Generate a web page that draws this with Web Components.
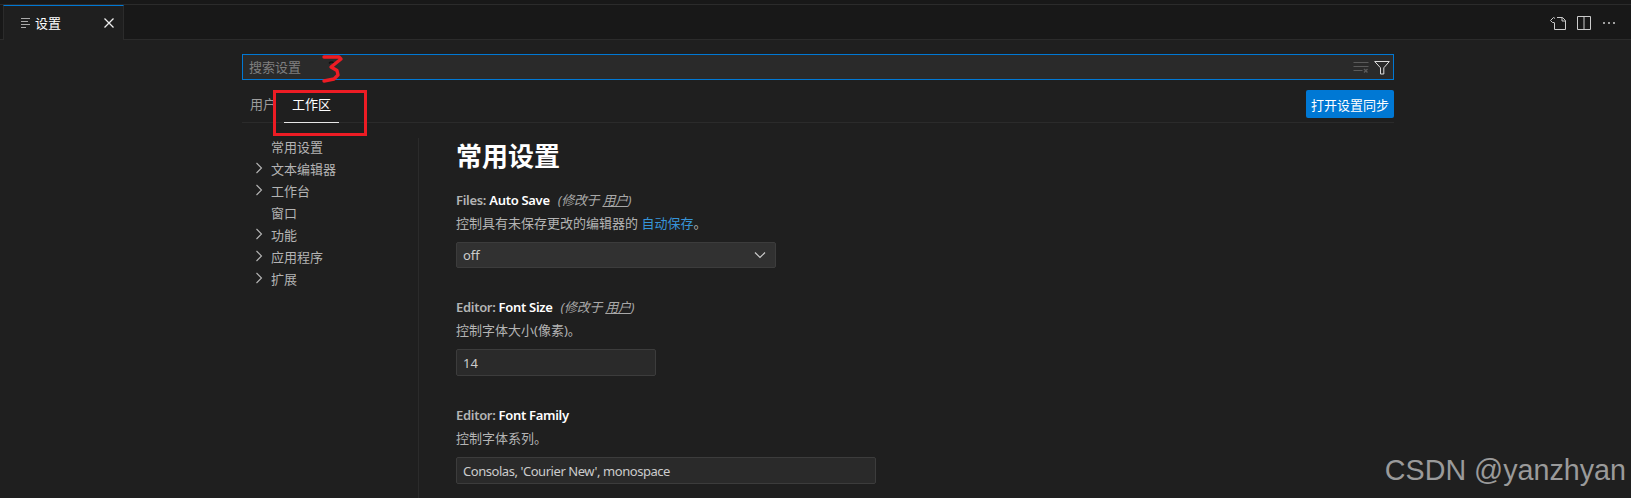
<!DOCTYPE html>
<html>
<head>
<meta charset="utf-8">
<style>
html, body { margin: 0; height: 498px; overflow: hidden; background: #1f1f1f; }
body { font: 13px "Noto Sans", "Noto Sans CJK SC", sans-serif; color: #ccc; position: relative; }
</style>
</head>
<body>
<editor-tabs></editor-tabs>
<settings-page>
  <settings-search></settings-search>
  <settings-targets></settings-targets>
  <div slot="body-nav">
    <nav-row>常用设置</nav-row>
    <nav-row arrow>文本编辑器</nav-row>
    <nav-row arrow>工作台</nav-row>
    <nav-row>窗口</nav-row>
    <nav-row arrow>功能</nav-row>
    <nav-row arrow>应用程序</nav-row>
    <nav-row arrow>扩展</nav-row>
  </div>
  <div slot="body-main">
    <settings-heading>常用设置</settings-heading>
    <setting-item cat="Files: " name="Auto Save" modified gap="29">
      <span slot="desc">控制具有未保存更改的编辑器的 <a style="color:#3794d8">自动保存</a>。</span>
      <setting-select value="off"></setting-select>
    </setting-item>
    <setting-item cat="Editor: " name="Font Size" modified gap="29">
      <span slot="desc">控制字体大小(像素)。</span>
      <setting-input value="14" width="200"></setting-input>
    </setting-item>
    <setting-item cat="Editor: " name="Font Family">
      <span slot="desc">控制字体系列。</span>
      <setting-input value="Consolas, 'Courier New', monospace" width="420" tight></setting-input>
    </setting-item>
  </div>
</settings-page>
<red-marks></red-marks>
<water-mark>CSDN @yanzhyan</water-mark>

<script>
// small helper, each class just dumps its markup in an open shadow root
function shadow(el, html) {
  el.attachShadow({ mode: "open" });
  el.shadowRoot.innerHTML = html;
}

class EditorTabs extends HTMLElement {
  connectedCallback() {
    shadow(this, `
<style>
:host { display: flex; box-sizing: border-box; height: 40px; padding-top: 4px; background: #181818; align-items: stretch; color: #fff; }
.wrap { display: flex; flex: 1; border-top: 1px solid #2b2b2b; border-bottom: 1px solid #2b2b2b; padding-left: 3px; }
.tab { box-sizing: border-box; width: 121px; height: 35px; background: #1f1f1f; border-top: 1px solid #0078d4; border-left: 1px solid #2b2b2b; border-right: 1px solid #2b2b2b; display: flex; align-items: center; padding-left: 17px; gap: 2px; }
.tab svg.x { margin-left: 40px; }
.title { font-size: 13px; color: #fff; padding-bottom: 1px; }
.actions { margin-left: auto; display: flex; gap: 9px; align-items: center; padding: 1px 14px 0 0; color: #ccc; }
svg { display: block; }
</style>
<div class="wrap">
  <div class="tab">
    <svg width="12" height="12" viewBox="0 0 12 12" fill="none" stroke="#aaa" stroke-width="1.2"><path d="M0 1.5h9M0 4.5h7M0 7.5h9M0 10.5h5"/></svg>
    <span class="title">设置</span>
    <svg class="x" width="12" height="12" viewBox="0 0 12 12" fill="none" stroke="#eee" stroke-width="1.3"><path d="M1.5 1.5l9 9M10.5 1.5l-9 9"/></svg>
  </div>
  <div class="actions">
    <svg width="18" height="18" viewBox="0 0 18 18" fill="none" stroke="#ccc" stroke-linejoin="round"><path d="M8 3.5h5.5l3 3v9h-11V9M13 3.5V7h3.5M5.5 8.5H3.5L1.5 6.5l3-3 1.5 1"/></svg>
    <svg width="16" height="16" viewBox="0 0 16 16" fill="none" stroke="#ccc"><path d="M1.5 1.5h13v13h-13zM8 1.5v13"/></svg>
    <svg width="16" height="16" viewBox="0 0 16 16" fill="#ccc"><circle cx="3" cy="8" r="1"/><circle cx="8" cy="8" r="1"/><circle cx="13" cy="8" r="1"/></svg>
  </div>
</div>`);
  }
}

class SettingsPage extends HTMLElement {
  connectedCallback() {
    shadow(this, `
<style>
:host { display: block; box-sizing: border-box; padding: 14px 237px 0 242px; }
.body { display: flex; margin-top: 15px; }
.nav { width: 177px; box-sizing: border-box; height: 361px; border-right: 1px solid #2b2b2b; }
::slotted([slot="body-nav"]) { margin-top: -3px; }
.main { padding-left: 37px; }
</style>
<slot></slot>
<div class="body">
  <div class="nav"><slot name="body-nav"></slot></div>
  <div class="main"><slot name="body-main"></slot></div>
</div>`);
  }
}

class SettingsSearch extends HTMLElement {
  connectedCallback() {
    shadow(this, `
<style>
:host { display: flex; box-sizing: border-box; height: 26px; background: #2a2a2a; border: 1px solid #0078d4; align-items: center; padding: 0 3px 0 5px; }
.ph { color: #7f7f7f; font-size: 13px; flex: 1; padding: 0 0 2px 1px; }
svg { display: block; }
.clear { margin-right: 5px; }
</style>
<span class="ph">搜索设置</span>
<svg class="clear" width="16" height="16" viewBox="0 0 16 16" fill="none" stroke="#5a5a5a"><path d="M0.5 3.5h15M0.5 7.5h15M0.5 11.5h9"/><path d="M11 10l3.5 3.5M14.5 10L11 13.5" stroke-width="1.4"/></svg>
<svg width="16" height="16" viewBox="0 0 16 16" fill="none" stroke="#ddd"><path d="M0.7 2.5h14.6L9.8 8.8V15H6.5V8.8z" stroke-linejoin="round"/></svg>`);
  }
}

class SettingsTargets extends HTMLElement {
  connectedCallback() {
    shadow(this, `
<style>
:host { display: flex; box-sizing: border-box; height: 43px; border-bottom: 1px solid #2b2b2b; padding-left: 8px; align-items: flex-start; font-size: 13px; }
.t { margin-top: 15px; height: 28px; box-sizing: border-box; color: #9d9d9d; white-space: nowrap; line-height: 18px; }
.user { width: 34px; }
.work { color: #fff; border-bottom: 1px solid #e7e7e7; padding: 0 8px; width: 55px; }
button { margin-left: auto; margin-top: 10px; width: 88px; height: 28px; padding: 0; border: 0; border-radius: 2px; background: #0078d4; color: #fff; font: inherit; }
</style>
<span class="t user">用户</span>
<span class="t work">工作区</span>
<button>打开设置同步</button>`);
  }
}

class NavRow extends HTMLElement {
  connectedCallback() {
    const arrow = this.hasAttribute("arrow") ?
      `<svg width="16" height="16" viewBox="0 0 16 16" fill="none" stroke="#b5b5b5" stroke-width="1.1"><path d="M5.5 3l5 5-5 5"/></svg>` : "";
    shadow(this, `
<style>
:host { display: flex; align-items: center; height: 22px; padding-left: 29px; position: relative; color: #b4b4b4; font-size: 13px; }
svg { position: absolute; left: 9px; top: 3px; }
</style>
${arrow}<slot></slot>`);
  }
}

class SettingsHeading extends HTMLElement {
  connectedCallback() {
    shadow(this, `
<style>
:host { display: block; font-size: 26px; font-weight: 700; color: #fff; line-height: 36px; margin-bottom: 16px; }
</style>
<slot></slot>`);
  }
}

class SettingItem extends HTMLElement {
  connectedCallback() {
    const mod = this.hasAttribute("modified") ?
      `<span class="mod">(修改于 <u>用户</u>)</span>` : "";
    const gap = this.getAttribute("gap") || 0;
    shadow(this, `
<style>
:host { display: block; margin-bottom: ${gap}px; }
.title { line-height: 21px; height: 22px; font-size: 13px; font-weight: 600; color: #b4b4b4; white-space: nowrap; letter-spacing: -0.3px; }
.name { color: #fff; }
.mod { font-weight: 400; font-style: italic; color: #a8a8a8; margin-left: 8px; }
.desc { line-height: 23px; height: 24px; color: #b4b4b4; font-size: 13px; margin-bottom: 6px; }
</style>
<div class="title">${this.getAttribute("cat")}<span class="name">${this.getAttribute("name")}</span>${mod}</div>
<div class="desc"><slot name="desc"></slot></div>
<slot></slot>`);
  }
}

class SettingSelect extends HTMLElement {
  connectedCallback() {
    shadow(this, `
<style>
:host { display: flex; box-sizing: border-box; width: 320px; height: 26px; background: #313131; border: 1px solid #3c3c3c; border-radius: 2px; align-items: center; justify-content: space-between; padding: 0 7px 0 6px; color: #ccc; font-size: 13px; }
svg { display: block; }
</style>
<span>${this.getAttribute("value")}</span>
<svg width="16" height="16" viewBox="0 0 16 16" fill="none" stroke="#ccc" stroke-width="1.2"><path d="M3 5.5l5 5 5-5"/></svg>`);
  }
}

class SettingInput extends HTMLElement {
  connectedCallback() {
    const spacing = this.hasAttribute("tight") ? "-0.45px" : "0";
    shadow(this, `
<style>
:host { display: flex; box-sizing: border-box; width: ${this.getAttribute("width")}px; height: 27px; background: #2a2a2a; border: 1px solid #3c3c3c; border-radius: 2px; align-items: center; padding: 0 6px; color: #ccc; font-size: 13px; letter-spacing: ${spacing}; }
</style>
<span>${this.getAttribute("value")}</span>`);
  }
}

// red pen marks drawn on top of the screenshot
class RedMarks extends HTMLElement {
  connectedCallback() {
    shadow(this, `
<style>
:host { display: block; position: absolute; left: 0; top: 0; width: 400px; height: 140px; pointer-events: none; }
.box { position: absolute; left: 273px; top: 90px; width: 94px; height: 46px; box-sizing: border-box; border: 3px solid #ed1c24; }
svg { position: absolute; left: 320px; top: 52px; }
</style>
<div class="box"></div>
<svg width="26" height="32" viewBox="0 0 26 32" fill="none" stroke-linejoin="round" stroke-linecap="round"><path d="M9.5 11c1-1.5 3-1.5 4 0" stroke="#111" stroke-width="1.5"/><path d="M4 5L19 5L21 7L11 15L17 18.5L18 23L14 27L4 29" stroke="#ed1c24" stroke-width="3.4"/></svg>`);
  }
}

class WaterMark extends HTMLElement {
  connectedCallback() {
    shadow(this, `
<style>
:host { display: block; position: absolute; right: 5px; top: 452px; font: 28.7px/36px "Liberation Sans", sans-serif; color: #9a9a9a; white-space: nowrap; }
</style>
<slot></slot>`);
  }
}

customElements.define("editor-tabs", EditorTabs);
customElements.define("settings-page", SettingsPage);
customElements.define("settings-search", SettingsSearch);
customElements.define("settings-targets", SettingsTargets);
customElements.define("nav-row", NavRow);
customElements.define("settings-heading", SettingsHeading);
customElements.define("setting-item", SettingItem);
customElements.define("setting-select", SettingSelect);
customElements.define("setting-input", SettingInput);
customElements.define("red-marks", RedMarks);
customElements.define("water-mark", WaterMark);
</script>
</body>
</html>
